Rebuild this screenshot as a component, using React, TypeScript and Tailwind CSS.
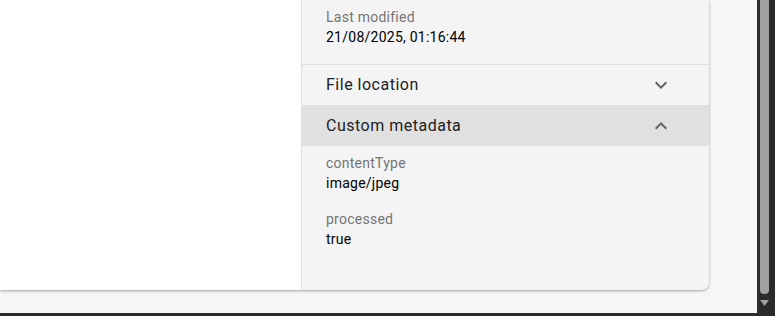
import React from 'react';

const Chevron = ({ up }: { up?: boolean }) => (
  <svg width="24" height="24" viewBox="0 0 24 24" className="fill-[#5f6368]">
    {up ? (
      <path d="M12 8l-6 6 1.41 1.41L12 10.83l4.59 4.58L18 14z" />
    ) : (
      <path d="M16.59 8.59L12 13.17 7.41 8.59 6 10l6 6 6-6z" />
    )}
  </svg>
);

const Field = ({ label, value }: { label: string; value: string }) => (
  <div className="tracking-[0.25px]">
    <div className="text-[14px] leading-[20px] text-[#757575]">{label}</div>
    <div className="text-[14px] leading-[20px] text-black">{value}</div>
  </div>
);

export default function App() {
  return (
    <div className="w-[775px] h-[316px] flex flex-col overflow-hidden font-['Roboto',sans-serif]">
      <div className="flex flex-1 min-h-0">
        <div className="flex-1 bg-[#f5f6f8] pr-[48px]">
          {/* card */}
          <div className="flex h-[290px] rounded-br-[8px] shadow-[0_1px_3px_rgba(0,0,0,0.35)] overflow-hidden">
            <div className="w-[302px] bg-white border-r border-[#e0e0e0]" />
            <div className="flex-1 bg-[#f4f4f4] flex flex-col">
              <div className="pt-[7px] pb-[17px] pl-[24px] border-b border-[#e0e0e0]">
                <Field label="Last modified" value="21/08/2025, 01:16:44" />
              </div>
              <div className="h-[40px] flex items-center justify-between pl-[24px] pr-[36px]">
                <span className="text-[16px] leading-[24px] tracking-[0.5px] text-[#202124]">File location</span>
                <Chevron />
              </div>
              <div className="h-[41px] flex items-center justify-between pl-[24px] pr-[36px] bg-[#e0e0e0]">
                <span className="text-[16px] leading-[24px] tracking-[0.5px] text-[#202124]">Custom metadata</span>
                <Chevron up />
              </div>
              <div className="pt-[7px] pl-[24px] flex flex-col gap-[16px]">
                <Field label="contentType" value="image/jpeg" />
                <Field label="processed" value="true" />
              </div>
            </div>
          </div>
        </div>
        {/* scrollbar */}
        <div className="w-[18px] bg-[#2b2b2b] flex flex-col pl-[3px] pr-[6px]">
          <div className="flex-1 bg-[#a0a0a0] rounded-b-[4px] mb-[6px]" />
          <div className="h-[13px] flex justify-center">
            <svg width="9" height="7" viewBox="0 0 9 7">
              <path d="M0 0h9L4.5 6z" fill="#a0a0a0" />
            </svg>
          </div>
        </div>
      </div>
      <div className="h-[3px] bg-[#2b2b2b]" />
    </div>
  );
}
